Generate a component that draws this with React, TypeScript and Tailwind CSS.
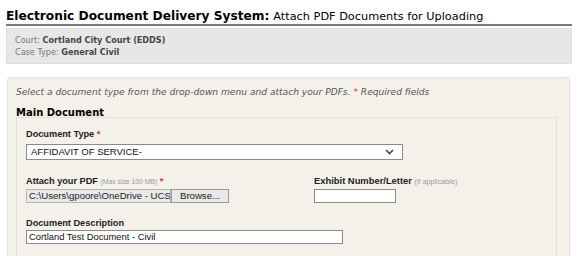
export default function App() {
  return (
    <div className="w-[579px] h-[256px] overflow-hidden bg-white font-['DejaVu_Sans',Verdana,sans-serif]">
      <div className="pl-[6px] w-[572px]">
        <h1 className="pt-[9px] border-b-2 border-[#7a7a7a] text-[12.2px] leading-[15px] text-black">
          <span className="font-bold">Electronic Document Delivery System:</span>{" "}
          <span className="text-[11.3px]">Attach PDF Documents for Uploading</span>
        </h1>
        <div className="mt-[2px] h-[36px] bg-[#e7e7e7] border border-[#dedede] px-[8px] pt-[5px] text-[8.1px] leading-[12px] text-[#777]">
          <div>
            Court: <span className="font-bold text-[#444]">Cortland City Court (EDDS)</span>
          </div>
          <div>
            Case Type: <span className="font-bold text-[#444]">General Civil</span>
          </div>
        </div>
      </div>

      <div className="ml-[7px] mt-[13px] w-[563px] h-[200px] rounded-[3px] border border-[#e8e3d6] bg-[#f4f1eb] pl-[8px] pt-[8px]">
        <p className="italic text-[9.1px] leading-[12px] text-[#555]">
          Select a document type from the drop-down menu and attach your PDFs.{" "}
          <span className="text-[#d33]">*</span> Required fields
        </p>
        <h2 className="mt-[10px] font-bold text-[10px] leading-[10px] text-black">Main Document</h2>
        <div className="-mt-[1px] w-[541px] h-[160px] border border-[#e6e1d6] pl-[9px] pt-[10px] font-['Liberation_Sans',Arial,sans-serif]">
          <label className="block font-bold text-[9.2px] leading-[12px] text-[#222]">
            Document Type <span className="text-[#d33]">*</span>
          </label>
          <div className="mt-[4px] w-[377px] h-[16px] border border-[#8a8a8a] bg-white flex items-center justify-between pl-[4px] pr-[8px] text-[9.5px] text-[#111]">
            <span>AFFIDAVIT OF SERVICE-</span>
            <svg width="9" height="6" viewBox="0 0 9 6" fill="none">
              <path d="M1 1l3.5 3.5L8 1" stroke="#444" strokeWidth="1.6" />
            </svg>
          </div>

          <div className="mt-[15px] flex">
            <div className="w-[288px]">
              <label className="block font-bold text-[9.2px] leading-[12px] text-[#222]">
                Attach your PDF <span className="font-normal text-[6.8px] text-[#999]">(Max size 100 MB)</span>{" "}
                <span className="text-[#d33]">*</span>
              </label>
              <div className="mt-[1px] flex h-[14px] w-[203px] text-[9.6px] leading-[12px]">
                <div className="w-[145px] overflow-hidden whitespace-nowrap border border-[#b5b5b5] bg-[#e9e9e9] pl-[2px] text-[#222]">
                  C:\Users\gpoore\OneDrive - UCS\
                </div>
                <div className="w-[58px] border border-[#9a9a9a] bg-[#e9e9e9] pl-[8px] text-[#222]">Browse...</div>
              </div>
            </div>
            <div>
              <label className="block font-bold text-[9.4px] leading-[12px] text-[#222]">
                Exhibit Number/Letter <span className="font-normal text-[7.2px] text-[#999]">(if applicable)</span>
              </label>
              <div className="mt-[1px] w-[82px] h-[14px] border border-[#8a8a8a] bg-white" />
            </div>
          </div>

          <label className="mt-[14px] block font-bold text-[9.2px] leading-[12px] text-[#222]">Document Description</label>
          <div className="mt-[1px] w-[317px] h-[14px] border border-[#8a8a8a] bg-white pl-[2px] text-[9.4px] leading-[12px] text-[#111]">
            Cortland Test Document - Civil
          </div>
        </div>
      </div>
    </div>
  );
}
